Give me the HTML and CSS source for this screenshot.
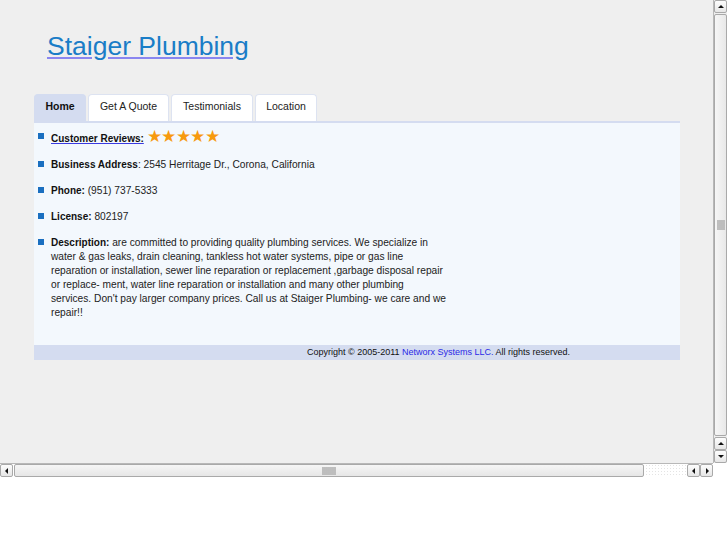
FILE: index.html
```
<!DOCTYPE html>
<html>
<head>
<meta charset="utf-8">
<link rel="stylesheet" href="styles.css">
</head>
<body>
<div class="frame">
  <div class="toprow">
    <div class="viewport">
      <div class="page">
        <h1 class="title"><a href="#"><span>Staiger Plumbing</span></a></h1>
        <div class="tabs">
          <div class="tab active">Home</div>
          <div class="tab">Get A Quote</div>
          <div class="tab">Testimonials</div>
          <div class="tab">Location</div>
        </div>
        <div class="panel">
          <ul class="info">
            <li><a class="rev" href="#">Customer Reviews:</a> <span class="stars">★★★★★</span></li>
            <li><b>Business Address</b>: 2545 Herritage Dr., Corona, California</li>
            <li><b>Phone:</b> (951) 737-5333</li>
            <li><b>License:</b> 802197</li>
            <li><b>Description:</b> are committed to providing quality plumbing services. We specialize in<br>water &amp; gas leaks, drain cleaning, tankless hot water systems, pipe or gas line<br>reparation or installation, sewer line reparation or replacement ,garbage disposal repair<br>or replace- ment, water line reparation or installation and many other plumbing<br>services. Don't pay larger company prices. Call us at Staiger Plumbing- we care and we<br>repair!!</li>
          </ul>
        </div>
        <div class="footer">Copyright © 2005-2011 <a href="#">Networx Systems LLC.</a> All rights reserved.</div>
      </div>
    </div>
    <div class="vbar">
      <div class="btn up"></div>
      <div class="vthumb"><div class="grip vgrip"></div></div>
      <div class="btn up"></div>
      <div class="btn down"></div>
    </div>
  </div>
  <div class="hrow">
    <div class="hbar">
      <div class="btn left"></div>
      <div class="hthumb"><div class="grip hgrip"></div></div>
      <div class="htrack"></div>
      <div class="btn left"></div>
      <div class="btn right"></div>
    </div>
    <div class="corner"></div>
  </div>
</div>
</body>
</html>
```
FILE: styles.css
```
* { box-sizing: border-box; }
html, body { margin: 0; padding: 0; background: #ffffff; }
body { font-family: "Liberation Sans", Arial, sans-serif; width: 727px; height: 545px; overflow: hidden; }
.frame { width: 727px; display: flex; flex-direction: column; }
.toprow { display: flex; height: 463px; }
.viewport { width: 713px; height: 463px; background: #efefef; overflow: hidden; }
.page { padding: 0 0 0 34px; width: 680px; }
.title { margin: 0; padding: 30px 0 0 13px; height: 94px; font-size: 26.5px; font-weight: normal; line-height: 32px; }
.title a { color: #8a86f0; text-decoration: underline; }
.title a span { color: #1a7dc7; }
.tabs { display: flex; gap: 2px; height: 27px; }
.tab { background: #ffffff; border: 1px solid #dde3f1; border-bottom: none; border-radius: 4px 4px 0 0; font-size: 10.5px; color: #222; padding: 0; line-height: 23px; height: 27px; white-space: nowrap; text-align: center; }
.tab:nth-child(2) { width: 81px; }
.tab:nth-child(3) { width: 82px; }
.tab:nth-child(4) { width: 62px; }
.tab.active { background: #d4dcf0; border-color: #d4dcf0; font-weight: bold; color: #111; width: 52px; }
.panel { background: #f3f8fd; border-top: 2px solid #d4dcf0; height: 224px; padding: 7px 0 0 4px; }
.info { list-style: none; margin: 0; padding: 0; width: 440px; font-size: 10.2px; color: #222; }
.info li { position: relative; padding-left: 13px; line-height: 14px; margin-bottom: 12px; white-space: nowrap; }
.info li::before { content: ""; position: absolute; left: 0; top: 3px; width: 6px; height: 6px; background: #1a6fc0; }
.info b { color: #111; font-size: 10px; }
.rev { font-weight: bold; color: #111; font-size: 10px; text-decoration-color: #3a3ae0; }
.stars { color: #f79a0e; font-size: 17px; letter-spacing: -0.5px; line-height: 14px; margin-left: 0; }
.footer { background: #d4dcf0; height: 15px; font-size: 9px; line-height: 15px; padding-left: 273px; color: #111; width: 646px; }
.footer a { color: #2929e6; text-decoration: none; }
.vbar { width: 14px; height: 463px; background: #efefef; border-left: 1px solid #b8b8b8; display: flex; flex-direction: column; }
.btn { width: 13px; height: 13px; background: linear-gradient(#fdfdfd, #e6e6e6); border: 1px solid #a9a9a9; border-radius: 2px; position: relative; flex: none; }
.btn::after { content: ""; position: absolute; width: 0; height: 0; }
.btn.up::after { left: 3px; top: 4px; border-left: 3px solid transparent; border-right: 3px solid transparent; border-bottom: 3px solid #111; }
.btn.down::after { left: 3px; top: 4px; border-left: 3px solid transparent; border-right: 3px solid transparent; border-top: 3px solid #111; }
.btn.left::after { left: 4px; top: 3px; border-top: 3px solid transparent; border-bottom: 3px solid transparent; border-right: 3px solid #111; }
.btn.right::after { left: 5px; top: 3px; border-top: 3px solid transparent; border-bottom: 3px solid transparent; border-left: 3px solid #111; }
.vthumb { flex: 1; margin: 1px 0; background: linear-gradient(90deg, #f6f6f6, #e8e8e8); border: 1px solid #a9a9a9; border-radius: 2px; display: flex; align-items: center; justify-content: center; }
.grip { background-image: radial-gradient(circle, #bcbcbc 0.7px, transparent 0.9px); background-size: 2px 2px; }
.vgrip { width: 8px; height: 10px; }
.hgrip { width: 14px; height: 8px; }
.hrow { display: flex; height: 14px; }
.hbar { width: 713px; display: flex; border-top: 1px solid #b8b8b8; background: #ffffff; }
.hthumb { width: 630px; margin: 0 1px; background: linear-gradient(#f6f6f6, #e6e6e6); border: 1px solid #a9a9a9; border-radius: 2px; display: flex; align-items: center; justify-content: center; }
.htrack { flex: 1; background-image: radial-gradient(circle, #e4e4e4 0.6px, transparent 1px); background-size: 3px 3px; }
.corner { width: 14px; background: #ffffff; }
```
